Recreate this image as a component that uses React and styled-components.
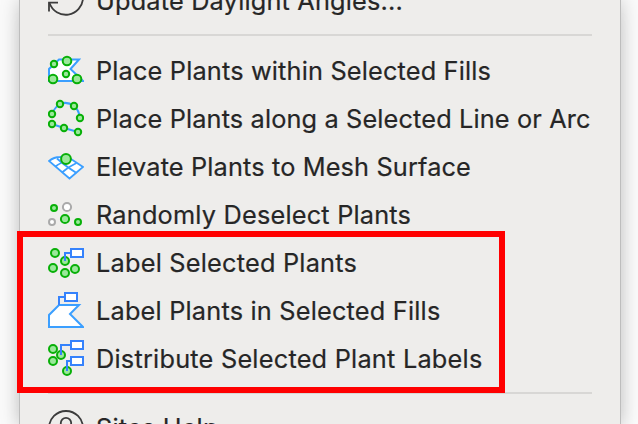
import styled, { createGlobalStyle } from "styled-components"

const Plant = ({ x, y, r = 4, gray }) => (
    <circle
        cx={x} cy={y} r={r}
        fill={gray ? "#FFFFFF" : "#9BE89B"}
        stroke={gray ? "#AAAAAA" : "#08B008"}
        strokeWidth="2"
    />
)

const Tag = ({ x, y, width = 12, height = 8 }) => (
    <rect x={x} y={y} width={width} height={height} fill="#FFFFFF" stroke="#3582FC" strokeWidth="2" />
)

const Lead = ({ d }) => <path d={d} fill="none" stroke="#3582FC" strokeWidth="2" />

const RefreshIcon = () => (
    <g fill="none" stroke="#3C3C3C" strokeWidth="1.8">
        <path d="M1.5 26 A17.2 17.2 0 0 0 35 21" />
        <path d="M1 34.5 V25.7 H10" />
    </g>
)

const FillsIcon = () => (
    <>
        <path d="M1 34 V22 L11 12.5 H31 L22.5 22 L35 34 Z" fill="#FFFFFF" stroke="#3B9FFF" strokeWidth="2" />
        <Plant x={6} y={17} r={3.2} />
        <Plant x={19} y={14} r={4.3} />
        <Plant x={5} y={32} r={4.3} />
        <Plant x={18} y={27} r={3.2} />
        <Plant x={29} y={32} r={4.3} />
    </>
)

const LineIcon = () => (
    <>
        <path d="M4 19 Q7 12 12 9 Q19 6 26 11 Q31 15 32 23 M4 29 L16 33 L30 37" fill="none" stroke="#3B9FFF" strokeWidth="2" />
        <Plant x={4} y={19} r={3.2} />
        <Plant x={12} y={9} r={3.2} />
        <Plant x={26} y={11} r={3.2} />
        <Plant x={32} y={23} r={3.2} />
        <Plant x={4} y={29} r={3.2} />
        <Plant x={16} y={33} r={3.2} />
        <Plant x={30} y={37} r={3.2} />
    </>
)

const MeshIcon = () => (
    <>
        <g stroke="#3B9FFF" strokeWidth="1.8">
            <path d="M1 18 Q6 14 12 14 Q18 13 23 16 L35 24 L21.5 35.5 Z" fill="#FFFFFF" />
            <path d="M7.5 23.5 Q12 19.5 22 17 M14 29.5 Q20 24 28.5 20 M9 15.5 Q16 22 28.5 30" fill="none" />
        </g>
        <Plant x={18} y={16} r={4.9} />
    </>
)

const RandomIcon = () => (
    <>
        <Plant x={6} y={17} r={3} />
        <Plant x={19} y={16} r={4.1} gray />
        <Plant x={4} y={31} r={3} gray />
        <Plant x={17} y={28} r={4.1} />
        <Plant x={30} y={31} r={3} />
    </>
)

const LabelIcon = () => (
    <>
        <Plant x={7} y={14} />
        <Plant x={5} y={29} />
        <Plant x={17} y={22} />
        <Plant x={27} y={30} />
        <Plant x={17} y={34} />
        <Lead d="M17 22 V14 H22" />
        <Tag x={23} y={10} />
    </>
)

const LabelFillsIcon = () => (
    <>
        <path d="M1 40 V28 L11 18 H31 L22 27 L35 40 Z" fill="#FFFFFF" stroke="#3B9FFF" strokeWidth="2" />
        <Lead d="M11 18 V10 H17" />
        <Tag x={17} y={6} />
    </>
)

const DistributeIcon = () => (
    <>
        <Plant x={5} y={14} />
        <Plant x={5} y={26} />
        <Plant x={13} y={20} />
        <Plant x={19} y={36} />
        <Lead d="M13 20 V10 H22" />
        <Lead d="M19 36 V26 H22" />
        <Tag x={23} y={6} />
        <Tag x={23} y={22} />
    </>
)

const HelpIcon = () => (
    <g fill="none" stroke="#3C3C3C" strokeWidth="1.8">
        <circle cx="18" cy="24" r="17" />
        <path d="M12.8 20 V19 A5.2 5.2 0 0 1 23.2 19 Q23 22 20 24" />
    </g>
)

const plantItems = [
    { text: "Place Plants within Selected Fills", Icon: FillsIcon, spacing: 0.17 },
    { text: "Place Plants along a Selected Line or Arc", Icon: LineIcon, spacing: 0.14 },
    { text: "Elevate Plants to Mesh Surface", Icon: MeshIcon, spacing: 0.15 },
    { text: "Randomly Deselect Plants", Icon: RandomIcon, spacing: 0.2 },
    { text: "Label Selected Plants", Icon: LabelIcon, spacing: 0.22 },
    { text: "Label Plants in Selected Fills", Icon: LabelFillsIcon, spacing: 0.2 },
    { text: "Distribute Selected Plant Labels", Icon: DistributeIcon, spacing: 0.23 },
]

const Item = ({ text, Icon, spacing = 0.18 }) => (
    <MenuItem>
        <ItemIcon viewBox="0 0 36 48">
            <Icon />
        </ItemIcon>
        <ItemText $spacing={spacing}>{text}</ItemText>
    </MenuItem>
)

const App = () => {
    return (
        <Page>
            <GlobalStyle />
            <Menu>
                <Item text="Update Daylight Angles..." Icon={RefreshIcon} />
                <Divider $top={9} $bottom={11} />
                {plantItems.map(item => <Item key={item.text} {...item} />)}
                <Divider $top={9} $bottom={10} />
                <Item text="Sites Help" Icon={HelpIcon} />
            </Menu>
            <Highlight />
        </Page>
    )
}

const GlobalStyle = createGlobalStyle`
    * {
        box-sizing: border-box;
    }

    body {
        margin: 0;
        overflow: hidden;
    }
`

const Page = styled.div`
    position: relative;
    width: 638px;
    height: 424px;
    padding: 0 17px 0 19px;
    overflow: hidden;
    background: #FAFAFA;
`

const Menu = styled.div`
    display: flow-root;
    height: 424px;
    padding: 0 28px;
    background: #EEEDEB;
    border: solid #BDBDBD;
    border-width: 0 1px;
    box-shadow: 0 0 18px rgba(0, 0, 0, 0.22), 0 20px 18px rgba(0, 0, 0, 0.04);

    > :first-child {
        margin-top: -23px;
    }
`

const MenuItem = styled.div`
    display: flex;
    align-items: center;
    height: 48px;
`

const ItemIcon = styled.svg`
    flex: none;
    width: 36px;
    height: 48px;
    margin-right: 12px;
`

const ItemText = styled.span`
    font-family: Inter, "Liberation Sans", sans-serif;
    font-size: 25.3px;
    line-height: 48px;
    letter-spacing: ${props => props.$spacing}px;
    white-space: nowrap;
    color: #262626;
    -webkit-text-stroke: 0.2px #262626;
`

const Divider = styled.div`
    height: 2px;
    margin: ${props => props.$top}px 0 ${props => props.$bottom}px;
    background: #D8D7D5;
`

const Highlight = styled.div`
    position: absolute;
    left: 17px;
    top: 231px;
    width: 488px;
    height: 162px;
    border: 6px solid #FF0000;
`

export default App
